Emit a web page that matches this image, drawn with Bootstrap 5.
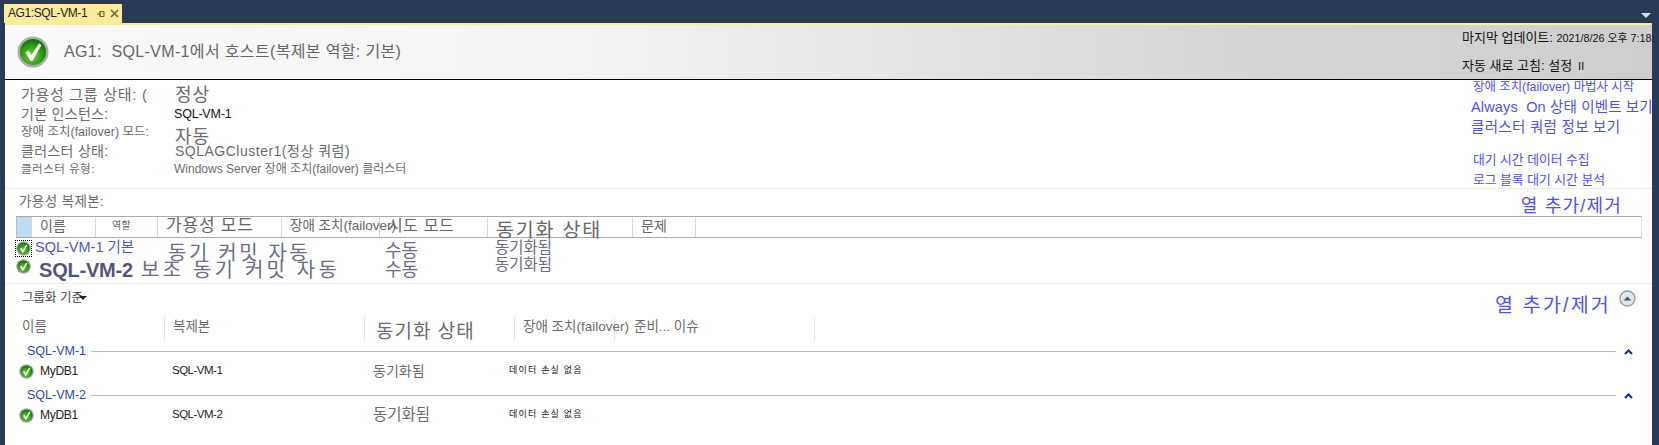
<!DOCTYPE html>
<html lang="ko">
<head>
<title>AG1:SQL-VM-1</title>
<meta charset="utf-8">
<meta name="viewport" content="width=device-width, initial-scale=1">
<link href="https://cdn.jsdelivr.net/npm/bootstrap@5.3.3/dist/css/bootstrap.min.css" rel="stylesheet">
<script src="https://cdn.jsdelivr.net/npm/bootstrap@5.3.3/dist/js/bootstrap.bundle.min.js"></script>
<style>
html, body { height: 445px; overflow: hidden; }
body { background: #2a3a56; font-family: "Liberation Sans", "Noto Sans CJK KR", sans-serif; color: #6c6c6c; font-size: 13px; }
a { color: #4f4fff; text-decoration: none; }
.top-strip { height: 23px; padding-left: 4px; }
.doc-tab { width: 118px; height: 19px; margin-top: 4px; background: #fdeb9c; color: #1c1c1c; font-size: 12px; letter-spacing: -.4px; line-height: 19px; padding-left: 4px; white-space: nowrap; }
.doc-tab span { width: 88px; flex-shrink: 0; }
.drop-arrow { width: 0; height: 0; margin: 13px 8px 0 0; border-left: 5px solid transparent; border-right: 5px solid transparent; border-top: 5px solid #d8dce4; }
.doc-body { margin: 0 7px 0 5px; height: 422px; background: #fff; border-top: 2px solid #fdeb9c; }
.status-bar { height: 55px; border-bottom: 1px solid #000; background: linear-gradient(90deg, #fafafa 0%, #f3f3f3 35%, #d6d6d6 75%, #cecece 100%); padding-left: 12px; }
.status-title { font-size: 16px; letter-spacing: .35px; margin-left: 15px; color: #666; }
.status-right { width: 190px; margin-left: auto; flex-shrink: 0; color: #111; white-space: nowrap; font-size: 13px; padding-top: 4px; }
.status-right div { height: 28px; line-height: 24px; }
.status-right small { font-size: 10.8px; }
.info-zone { height: 109px; border-bottom: 1px solid #ececec; }
.info-left { padding: 6px 0 0 16px; }
.info-row { height: 18.5px; line-height: 18px; white-space: nowrap; }
.info-key { width: 154px; flex-shrink: 0; }
.key-big { font-size: 15px; letter-spacing: .7px; }
.key-mid { font-size: 14px; letter-spacing: .3px; }
.key-sm { font-size: 12.5px; }
.key-xs { font-size: 11.5px; letter-spacing: .5px; }
.val-big { font-size: 18px; letter-spacing: 1px; }
.val-auto { font-size: 18px; letter-spacing: 1px; padding-top: 10px; }
.val-mid { font-size: 14px; letter-spacing: .5px; }
.val-dark { color: #111; font-size: 12.5px; margin-left: -1px; letter-spacing: -.2px; }
.val-sm { font-size: 12px; margin-left: -1px; }
.link-col { width: 181px; margin-top: -3px; white-space: nowrap; margin-left: auto; }
.link-col a { display: block; height: 20px; line-height: 20px; }
.lnk-a { font-size: 12.8px; padding-left: 2px; }
.lnk-first { font-size: 12.4px; padding-left: 2px; }
.lnk-b { font-size: 14.5px; letter-spacing: .15px; }
.lnk-gap { margin-bottom: 13px; letter-spacing: .3px; font-size: 14.5px; }
.add-cols { font-size: 18px; letter-spacing: 1.2px; margin-top: 8px; }
.replica-head { height: 27px; padding: 0 30px 0 14px; }
.replica-head span.rep-lbl { font-size: 13.5px; letter-spacing: .4px; }
.grid-head { height: 22px; margin: 0 10px 0 11px; border-top: 1px solid #aaa; border-bottom: 1px solid #aaa; border-right: 1px solid #ddd; border-left: 1px solid #bbb; white-space: nowrap; }
.grid-head > div { height: 20px; line-height: 18px; flex-shrink: 0; border-right: 1px solid #d8d8d8; color: #666; }
.corner { width: 15px; background: #bcdcf4; border-right: 0 !important; }
.rep-row { white-space: nowrap; padding-left: 11px; }
.rep-row > * { flex-shrink: 0; }
.rep-one { height: 20px; }
.rep-two { height: 23px; }
.focus-box { outline: 1px dotted #000; outline-offset: 0; }
.rep-link { width: 137px; font-size: 14.5px; color: #5555c8; }
.big-name { font-size: 20px; font-weight: 700; color: #55557c; width: 110px; padding-left: 8px; letter-spacing: -.2px; }
.gray-txt { color: #6d6d85; }
.mode-one { width: 217px; font-size: 20px; letter-spacing: 2.6px; line-height: 21px; padding-top: 10px; }
.mode-two { width: 244px; font-size: 20px; letter-spacing: 3.2px; }
.hand-txt { width: 110px; font-size: 18px; line-height: 20px; }
.hand-one { padding-top: 5px; }
.sync-txt { font-size: 15.5px; line-height: 18px; }
.sync-two { padding-bottom: 10px; }
.icon-up { margin-bottom: 6px; }
.sync-note { height: 1px; background: #ececec; margin-top: 2px; }
.group-bar { height: 33px; padding: 0 16px 5px 17px; }
.group-bar .grp-lbl { font-size: 12.5px; color: #444; }
.group-bar .add-cols { font-size: 19.5px; letter-spacing: 2.2px; margin-top: 15px; }
.caret-down { display: inline-block; margin: 0 0 0 -4px; width: 0; height: 0; border-left: 4px solid transparent; border-right: 4px solid transparent; border-top: 4px solid #222; vertical-align: middle; }
.db-head { height: 24px; margin-left: 4px; white-space: nowrap; margin-bottom: 3px; }
.db-head > div { flex-shrink: 0; height: 24px; line-height: 20px; border-right: 1px solid #e4e4e4; padding-left: 8px; font-size: 13.5px; }
.db-group { height: 15px; line-height: 15px; padding-left: 22px; color: #2a4aa8; font-size: 12.5px; }
.db-group i { flex: 0 0 auto; display: block; width: 1525px; height: 1px; background: #b4bdd8; margin-left: 5px; }
.db-group svg { margin-left: 8px; }
.db-row { height: 29px; padding: 0 0 5px 14px; white-space: nowrap; font-size: 12px; color: #222; }
.db-row > * { flex-shrink: 0; }
.db-name { width: 138px; padding-left: 6px; letter-spacing: -.3px; }
.db-rep { width: 201px; font-size: 11.5px; letter-spacing: -.5px; }
.db-sync { width: 136px; color: #6c6c6c; }
.db-note { font-size: 9px; letter-spacing: 1.2px; }
</style>
</head>
<body>

<svg width="0" height="0" class="d-block">
  <defs>
    <radialGradient id="greenFill" cx="45%" cy="65%" r="65%">
      <stop offset="0%" stop-color="#7fd22e"/>
      <stop offset="60%" stop-color="#2f9e12"/>
      <stop offset="100%" stop-color="#0f6a0a"/>
    </radialGradient>
    <symbol id="okIcon" viewBox="0 0 32 32">
      <circle cx="16" cy="16" r="15.5" fill="#a9adad"/>
      <circle cx="16" cy="16" r="13" fill="url(#greenFill)"/>
      <path d="M8.5 16.5 L11.5 14.5 L14.5 19 L22 7.5 L24.5 9 L15.5 25 L13.5 25 Z" fill="#fff"/>
    </symbol>
  </defs>
</svg>

<!-- 문서 탭 -->
<div class="top-strip d-flex justify-content-between">
  <div class="doc-tab d-flex align-items-center">
    <span>AG1:SQL-VM-1</span>
    <svg width="10" height="10" viewBox="0 0 10 10"><path d="M1 5h3M4 2.5h4v5H4zM4 2v6M6.5 4.5h1" fill="none" stroke="#6d6030"/></svg>
    <svg width="9" height="9" viewBox="0 0 9 9" class="ms-1"><path d="M1 1l7 7M8 1l-7 7" stroke="#6d6030" stroke-width="1.5"/></svg>
  </div>
  <div class="drop-arrow"></div>
</div>

<div class="doc-body">
  <!-- 상태 머리글 -->
  <div class="status-bar d-flex align-items-center">
    <svg width="32" height="32"><use href="#okIcon"/></svg>
    <div class="status-title">AG1:&nbsp; SQL-VM-1에서 호스트(복제본 역할: 기본)</div>
    <div class="status-right">
      <div>마지막 업데이트: <small>2021/8/26 오후 7:18:</small></div>
      <div>자동 새로 고침: 설정 <small>Ⅱ</small></div>
    </div>
  </div>

  <!-- 가용성 그룹 요약 -->
  <div class="info-zone d-flex">
    <div class="info-left">
      <div class="info-row d-flex align-items-center"><div class="info-key key-big">가용성 그룹 상태: (</div><div class="val-big">정상</div></div>
      <div class="info-row d-flex align-items-center"><div class="info-key key-mid">기본 인스턴스:</div><div class="val-dark">SQL-VM-1</div></div>
      <div class="info-row d-flex align-items-center"><div class="info-key key-sm">장애 조치(failover) 모드:</div><div class="val-auto">자동</div></div>
      <div class="info-row d-flex align-items-center"><div class="info-key key-mid">클러스터 상태:</div><div class="val-mid">SQLAGCluster1(정상 쿼럼)</div></div>
      <div class="info-row d-flex align-items-center"><div class="info-key key-xs">클러스터 유형:</div><div class="val-sm">Windows Server 장애 조치(failover) 클러스터</div></div>
    </div>
    <div class="link-col">
      <a href="#" class="lnk-first">장애 조치(failover) 마법사 시작</a>
      <a href="#" class="lnk-b">Always&nbsp; On 상태 이벤트 보기</a>
      <a href="#" class="lnk-gap">클러스터 쿼럼 정보 보기</a>
      <a href="#" class="lnk-a">대기 시간 데이터 수집</a>
      <a href="#" class="lnk-a">로그 블록 대기 시간 분석</a>
    </div>
  </div>

  <!-- 가용성 복제본 -->
  <div class="replica-head d-flex align-items-center justify-content-between">
    <span class="rep-lbl">가용성 복제본:</span>
    <a href="#" class="add-cols">열 추가/제거</a>
  </div>
  <div class="grid-head d-flex">
    <div class="corner"></div>
    <div class="ps-2" style="width:64px;font-size:14px">이름</div>
    <div class="ps-3" style="width:62px;font-size:10px">역할</div>
    <div class="ps-2" style="width:124px;font-size:17px;letter-spacing:.8px">가용성 모드</div>
    <div class="ps-2" style="width:98px;font-size:13.5px">장애 조치(failover)</div>
    <div class="ps-2" style="width:108px;font-size:16px;letter-spacing:.6px">시도 모드</div>
    <div class="ps-2" style="width:145px;font-size:19.5px;letter-spacing:1.8px;line-height:26px">동기화 상태</div>
    <div class="ps-2" style="width:63px;font-size:14px">문제</div>
  </div>
  <div class="rep-row rep-one d-flex align-items-center">
    <svg width="15" height="15" class="focus-box"><use href="#okIcon"/></svg>
    <a href="#" class="rep-link ps-1">SQL-VM-1 기본</a>
    <div class="gray-txt mode-one">동기 커밋 자동</div>
    <div class="gray-txt hand-txt hand-one">수동</div>
    <div class="gray-txt sync-txt">동기화됨</div>
  </div>
  <div class="rep-row rep-two d-flex align-items-center">
    <svg width="15" height="15" class="icon-up"><use href="#okIcon"/></svg>
    <div class="big-name">SQL-VM-2</div>
    <div class="gray-txt mode-two">보조 동기 커밋 자동</div>
    <div class="gray-txt hand-txt">수동</div>
    <div class="gray-txt sync-txt sync-two">동기화됨</div>
  </div>
  <div class="sync-note"></div>

  <!-- 데이터베이스 -->
  <div class="group-bar d-flex align-items-center justify-content-between">
    <div class="grp-lbl">그룹화 기준<span class="caret-down"></span></div>
    <div class="d-flex align-items-center">
      <a href="#" class="add-cols">열 추가/제거</a>
      <svg width="17" height="17" viewBox="0 0 17 17" class="ms-2">
        <circle cx="8.5" cy="8.5" r="7.5" fill="#e8e8e2" stroke="#8ea0b0" stroke-width="1.4"/>
        <path d="M4.5 10.5L8.5 6.5l4 4z" fill="#3d5a8c"/>
      </svg>
    </div>
  </div>
  <div class="db-head d-flex">
    <div style="width:156px;padding-left:13px">이름</div>
    <div style="width:200px">복제본</div>
    <div style="width:150px;font-size:19px;letter-spacing:1px;line-height:30px;padding-left:11px">동기화 상태</div>
    <div style="width:100px">장애 조치(failover)</div>
    <div style="width:200px;padding-left:19px">준비... 이슈</div>
  </div>
  <div class="db-group d-flex align-items-center">SQL-VM-1<i></i>
    <svg width="9" height="6" viewBox="0 0 9 6"><path d="M1 5l3.5-3.5L8 5" fill="none" stroke="#0a2e8a" stroke-width="2"/></svg>
  </div>
  <div class="db-row d-flex align-items-center">
    <svg width="15" height="15"><use href="#okIcon"/></svg>
    <div class="db-name">MyDB1</div>
    <div class="db-rep">SQL-VM-1</div>
    <div class="db-sync" style="font-size:14px">동기화됨</div>
    <div class="db-note">데이터 손실 없음</div>
  </div>
  <div class="db-group d-flex align-items-center">SQL-VM-2<i></i>
    <svg width="9" height="6" viewBox="0 0 9 6"><path d="M1 5l3.5-3.5L8 5" fill="none" stroke="#0a2e8a" stroke-width="2"/></svg>
  </div>
  <div class="db-row d-flex align-items-center">
    <svg width="15" height="15"><use href="#okIcon"/></svg>
    <div class="db-name">MyDB1</div>
    <div class="db-rep">SQL-VM-2</div>
    <div class="db-sync" style="font-size:15.5px">동기화됨</div>
    <div class="db-note">데이터 손실 없음</div>
  </div>
</div>

</body>
</html>
